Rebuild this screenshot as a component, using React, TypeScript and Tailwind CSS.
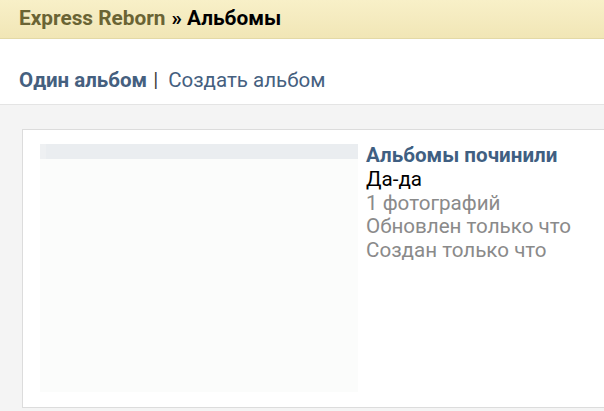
export default function App() {
  return (
    <div
      className="flex h-[411px] w-[604px] flex-col overflow-hidden bg-white"
      style={{ fontFamily: "Roboto, 'Liberation Sans', sans-serif" }}
    >
      <header className="flex h-[39px] shrink-0 items-center border-b border-[#e3d9a6] bg-gradient-to-b from-[#f8f0c8] to-[#f1e6b6] pl-[19px] text-[20.8px] font-bold">
        <span className="text-[#6a6434]">Express Reborn</span>
        <span className="ml-[6px] text-black">» Альбомы</span>
      </header>

      <nav className="flex h-[65px] shrink-0 items-center pl-[19px] pt-[18px] text-[20.5px]">
        <span className="font-bold text-[#45607f]">Один альбом</span>
        <span className="ml-[6px] text-[#444]">|</span>
        <span className="ml-[10px] text-[#45607f]">Создать альбом</span>
      </nav>

      <main className="flex flex-1 flex-col border-t border-[#e4e4e4] bg-[#f4f4f4] pl-[22px] pt-[24px] pb-[3px]">
        <div className="flex flex-1 border border-r-0 border-[#dcdcdc] bg-white pl-[17px] pt-[14px] pb-[15px]">
          <div className="flex w-[318px] shrink-0 flex-col bg-[#fbfcfb]">
            <div className="h-[15px] border-l-[6px] border-[#eef0f2] bg-[#eaedf0]" />
          </div>
          <div className="ml-[8px] flex flex-col text-[20.6px] leading-[23.75px]">
            <span className="font-bold text-[#3f5f82]">Альбомы починили</span>
            <span className="text-black">Да-да</span>
            <span className="text-[#8a8a8a]">1 фотографий</span>
            <span className="text-[#8a8a8a]">Обновлен только что</span>
            <span className="text-[#8a8a8a]">Создан только что</span>
          </div>
        </div>
      </main>
    </div>
  );
}
